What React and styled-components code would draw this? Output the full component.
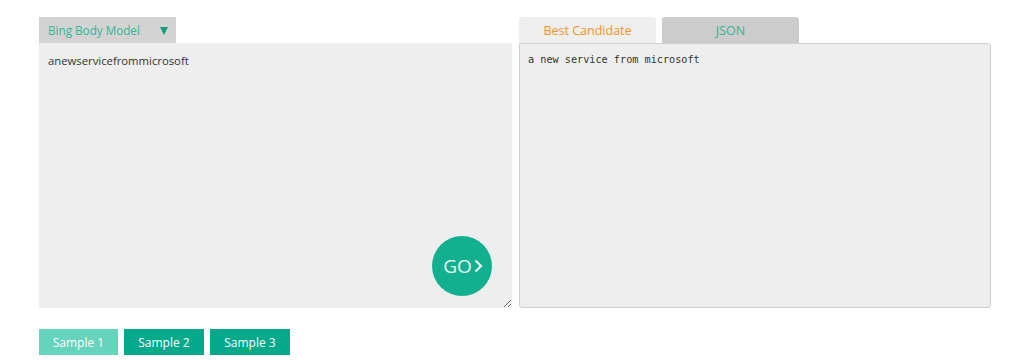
import React from "react";
import styled, { createGlobalStyle } from "styled-components";

const Global = createGlobalStyle`
  html, body { margin: 0; padding: 0; background: #ffffff; }
  body { font-family: "Open Sans", "Noto Sans", sans-serif; }
`;

const Page = styled.div`
  width: 1024px;
  height: 361px;
  box-sizing: border-box;
  padding: 17px 33px 0 39px;
  display: flex;
  flex-direction: column;
`;

const Columns = styled.div`
  display: flex;
  gap: 7px;
`;

const Column = styled.div`
  display: flex;
  flex-direction: column;
  width: ${(p) => p.$w}px;
`;

const Dropdown = styled.div`
  width: 137px;
  height: 26px;
  box-sizing: border-box;
  background: #d3d3d3;
  color: #35b697;
  font-size: 11.7px;
  display: flex;
  align-items: center;
  justify-content: space-between;
  padding: 0 8px 0 9px;
`;

const Caret = styled.span`
  width: 0;
  height: 0;
  border-left: 4.5px solid transparent;
  border-right: 4.5px solid transparent;
  border-top: 8px solid #109e80;
  margin-top: 1px;
`;

const InputWrap = styled.div`
  position: relative;
  height: 265px;
`;

const Input = styled.textarea`
  width: 100%;
  height: 100%;
  box-sizing: border-box;
  border: none;
  outline: none;
  background: #eeeeee;
  font-family: "Open Sans", "Noto Sans", sans-serif;
  font-size: 11.3px;
  color: #333;
  padding: 10px 9px;
  margin: 0;
  display: block;
  resize: both;
`;

const Go = styled.button`
  position: absolute;
  right: 20px;
  bottom: 12px;
  width: 60px;
  height: 60px;
  border-radius: 50%;
  border: none;
  background: #13b08f;
  color: #e9f8f3;
  font-family: "Open Sans", "Noto Sans", sans-serif;
  font-size: 19px;
  display: flex;
  align-items: center;
  justify-content: center;
  gap: 2px;
  padding: 0 0 0 2px;
`;

const Tabs = styled.div`
  display: flex;
  gap: 6px;
  height: 26px;
`;

const Tab = styled.div`
  width: 137px;
  box-sizing: border-box;
  border-radius: 3px 3px 0 0;
  background: ${(p) => (p.$active ? "#efefef" : "#cccccc")};
  color: ${(p) => (p.$active ? "#ec9431" : "#37b496")};
  font-size: 12.5px;
  display: flex;
  align-items: center;
  justify-content: center;
  padding-top: 1px;
`;

const Output = styled.div`
  height: 265px;
  box-sizing: border-box;
  border: 1px solid #cfcfcf;
  border-radius: 0 3px 3px 3px;
  background: #eeeeee;
  padding: 10px 8px;
  font-family: "DejaVu Sans Mono", "Liberation Mono", monospace;
  font-size: 10.2px;
  color: #333;
`;

const Samples = styled.div`
  display: flex;
  gap: 6px;
  margin-top: 21px;
`;

const SampleButton = styled.button`
  width: ${(p) => (p.$light ? 79 : 80)}px;
  height: 26px;
  border: none;
  padding: 0;
  background: ${(p) => (p.$light ? "#66d3bc" : "#03a98a")};
  color: #ffffff;
  font-family: "Open Sans", "Noto Sans", sans-serif;
  font-size: 12px;
`;

export default function App() {
  return (
    <>
      <Global />
      <Page>
        <Columns>
          <Column $w={473}>
            <Dropdown>
              <span>Bing Body Model</span>
              <Caret />
            </Dropdown>
            <InputWrap>
              <Input readOnly defaultValue="anewservicefrommicrosoft" />
              <Go>
                <span>GO</span>
                <svg width="9" height="14" viewBox="0 0 9 14">
                  <path d="M1.5 1.5 L7 7 L1.5 12.5" fill="none" stroke="#e9f8f3" strokeWidth="2.2" />
                </svg>
              </Go>
            </InputWrap>
          </Column>
          <Column $w={472}>
            <Tabs>
              <Tab $active>Best Candidate</Tab>
              <Tab>JSON</Tab>
            </Tabs>
            <Output>a new service from microsoft</Output>
          </Column>
        </Columns>
        <Samples>
          <SampleButton $light>Sample 1</SampleButton>
          <SampleButton>Sample 2</SampleButton>
          <SampleButton>Sample 3</SampleButton>
        </Samples>
      </Page>
    </>
  );
}
